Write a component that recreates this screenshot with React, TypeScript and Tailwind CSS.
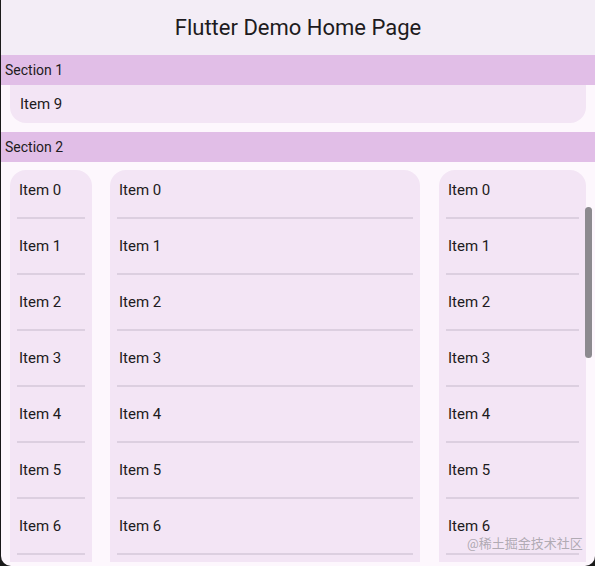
import React from "react";

const items = [0, 1, 2, 3, 4, 5, 6];

function ItemColumn({ width, textPad }: { width: string; textPad: string }) {
  return (
    <div className={`${width} shrink-0 rounded-t-[16px] bg-[#f3e5f5]`}>
      {items.map((i) => (
        <div key={i} className="h-[56px]">
          <div className={`h-[47px] pt-[10px] leading-[20px] text-[15px] text-[#1d1b20] ${textPad}`}>Item {i}</div>
          <div className="mx-[7px] h-[2px] bg-[#dccfe0]" />
        </div>
      ))}
    </div>
  );
}

export default function App() {
  return (
    <div className="h-[566px] w-[595px] overflow-hidden bg-[#1a1a1a]" style={{ fontFamily: "Roboto, 'Noto Sans CJK SC', sans-serif" }}>
      <div className="relative ml-[1px] h-[566px] overflow-hidden rounded-b-[10px] bg-[#fdf7fd]">
        {/* App bar */}
        <div className="flex h-[55px] items-center justify-center bg-[#f3edf6] text-[22px] text-[#1d1b20]">
          Flutter Demo Home Page
        </div>

        {/* Section 1 */}
        <div className="flex h-[30px] items-center bg-[#e1bee7] pl-[4px] text-[14px] text-[#1d1b20]">Section 1</div>
        <div className="mx-[9px] flex h-[38px] items-center rounded-b-[16px] bg-[#f3e5f5] pl-[10px] text-[15px] text-[#1d1b20]">
          Item 9
        </div>

        {/* Section 2 */}
        <div className="mt-[9px] flex h-[30px] items-center bg-[#e1bee7] pl-[4px] text-[14px] text-[#1d1b20]">Section 2</div>
        <div className="mt-[8px] flex pl-[9px]">
          <ItemColumn width="w-[82px]" textPad="pl-[9px]" />
          <div className="w-[18px] shrink-0" />
          <ItemColumn width="w-[310px]" textPad="pl-[9px]" />
          <div className="w-[19px] shrink-0" />
          <ItemColumn width="w-[147px]" textPad="pl-[9px]" />
        </div>

        {/* scrollbar */}
        <div className="absolute left-[584px] top-[207px] h-[151px] w-[7px] rounded-full bg-[#8c8a8f]" />

        {/* watermark */}
        <div className="absolute left-[466px] top-[534px] text-[13px] text-[#a8a3ab]/90">@稀土掘金技术社区</div>
      </div>
    </div>
  );
}
